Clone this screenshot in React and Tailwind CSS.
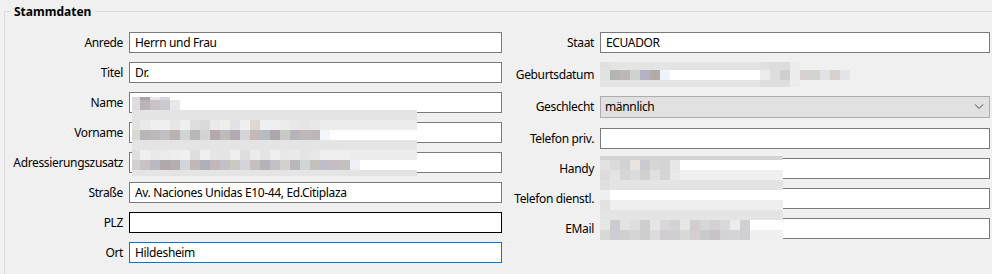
import React from 'react';

const font = { fontFamily: '"Noto Sans", "Liberation Sans", sans-serif', letterSpacing: '-0.35px' };

// pixelated blur boxes over the private data: [top, height, cells [x, w, color]]
function strip(x0, colors) {
  // first cell ends at the next multiple of ten, the rest are 10px wide
  const out = [];
  let x = x0;
  colors.forEach((c) => {
    const next = Math.floor(x / 10) * 10 + 10;
    out.push([x, next - x, c]);
    x = next;
  });
  return out;
}

const mosaics = [
  // Name / Vorname / Adressierungszusatz
  [97, 3, [[132, 8, '#dcd8dc'], [140, 10, '#aaa2a8'], [150, 10, '#e8e4e8'], [160, 10, '#d6d6de']]],
  [100, 10, strip(132, ['#e0dde0', '#bab4b8', '#c9c1c4', '#c9cbd0', '#e8e8ea'])],
  [110, 10, [[132, 285, '#e4e4e4']]],
  [120, 10, [...strip(132, ['#e4e2e0', '#e9e9e9', '#efefef', '#efefef', '#e6e6e6', '#efefef', '#dedede', '#dadada', '#eaeaea', '#eeeeec', '#e2e2e4', '#efefef', '#dcd8d6', '#eef0f2', '#efefef', '#ececea', '#e8e8e8', '#e6e6e6', '#e8e8e8']), [320, 97, '#ececec']]],
  [130, 10, [...strip(132, ['#d8d8d4', '#b8b6b8', '#bcbab8', '#c0bfc4', '#bab2b2', '#d0d2d6', '#b8b8b6', '#d4d2d4', '#b4aaae', '#bcbcb8', '#b2aab2', '#d4d4d8', '#c4b8b8', '#b8bcc0', '#ada6ac', '#c8c8c6', '#b4b4ba', '#c0b8b8', '#bcb6b8']), [320, 10, '#f0f6fa']]],
  [140, 10, [[132, 285, '#e4e4e4']]],
  [150, 10, [...strip(132, ['#dedede', '#efefef', '#e9e9e9', '#ebebeb', '#efecee', '#eef0f2', '#dedede', '#efefef', '#e6e6e6', '#e4e4e4', '#efefef', '#dedede', '#ebebeb', '#e4e4e4', '#efefef', '#e8e8e8', '#e9e9e9', '#e4e4e4', '#e8e8e8']), [320, 30, '#efefef'], [350, 67, '#ececec']]],
  [160, 10, [...strip(132, ['#d4d0d2', '#c8c4c4', '#bab8c0', '#b0a8aa', '#b4aeb0', '#d0d6d8', '#c0b8b8', '#b0b0b8', '#c0b8ba', '#c4c0c8', '#ccc8c4', '#d4d4da', '#c4c0c0', '#b4b4b8', '#c4c0c4', '#d4d0ce', '#b8b8bc', '#d0d4d4', '#c4c0bc', '#c0bcc8', '#c4bec4', '#c4c0c0']), [350, 10, '#eef0f4']]],
  [170, 6, [[132, 285, '#e4e4e4']]],
  // Geburtsdatum
  [62, 8, [[600, 10, '#e0e0e0'], [610, 150, '#e4e4e4'], [760, 10, '#e0e0e0'], [770, 20, '#dcdcdc'], [790, 10, '#ececec']]],
  [70, 10, [...strip(600, ['#e2e2e0', '#b4b6b2', '#bcb8b8', '#d0d2ce', '#b4b2c2', '#b0aca6', '#eef3fb']), [670, 90, '#ffffff'], ...strip(760, ['#ececec', '#dedede', '#d0cece', '#ececec', '#d6d2d0', '#d2d4d2', '#e2e2e4', '#d6d2d0', '#e4e4e6'])]],
  [80, 7, [[600, 160, '#e4e4e4'], [760, 30, '#dedede'], [790, 10, '#ececec']]],
  // Handy / Telefon dienstl. / EMail
  [156, 4, [[600, 183, '#d4d4d4']]],
  [160, 10, [...strip(600, ['#e2e2e2', '#dadadc', '#d2d2d2', '#e8e5e0', '#cacbd0', '#d6d6d6', '#d4d4d4', '#e6e6e8']), [680, 103, '#ffffff']]],
  [170, 10, [...strip(600, ['#dcdcdc', '#e4e4e6', '#d6d6d6', '#dcdcdc', '#d0d0d0', '#e0e0e0', '#d4d4d4', '#e8e8e8']), [680, 103, '#efefef']]],
  [180, 10, [[600, 10, '#e0e0e0'], [610, 173, '#e4e4e4']]],
  [190, 10, [[600, 10, '#efefef'], [610, 173, '#ffffff']]],
  [200, 10, [[600, 10, '#e2e2e2'], [610, 173, '#efefef']]],
  [210, 10, [[600, 183, '#e4e4e4']]],
  [220, 10, [...strip(600, ['#e6e6e4', '#cdcbcf', '#e2e2e2', '#dcdedf', '#cfcdcf', '#e6e6e6', '#dad8d6', '#d4d2d6', '#e6e6e4', '#d1cdd1', '#d4d6d8', '#d4d0d4', '#dad8da', '#ececec', '#d0d0d2']), [750, 33, '#ffffff']]],
  [230, 10, [...strip(600, ['#d8d8d6', '#cfcdd1', '#d0d0d0', '#d6d4d6', '#cecece', '#dcdcdc', '#d0ced2', '#d0ced2', '#d8d8d6', '#d4d0d2', '#c8cacc', '#c8c4c6', '#d4d2d4', '#d4d4d6', '#d0d0d2']), [750, 33, '#efefef']]],
];

function Mosaic() {
  return (
    <div className="pointer-events-none absolute inset-0">
      {mosaics.map(([top, h, cells], i) =>
        cells.map(([x, w, c], j) => (
          <div key={`${i}-${j}`} className="absolute" style={{ top, left: x, width: w, height: h, background: c }} />
        ))
      )}
    </div>
  );
}

function Field({ label, value, labelW, inputW, border = 'border-[#7a7a7a]', className = '' }) {
  return (
    <div className={`flex h-[21px] items-center gap-[6px] ${className}`}>
      <span className="shrink-0 text-right text-[12px] text-black" style={{ width: labelW }}>{label}</span>
      <div className={`flex h-[21px] items-center border bg-white pl-[5px] text-[12px] text-black ${border}`} style={{ width: inputW }}>
        {value}
      </div>
    </div>
  );
}

export default function App() {
  const L = { labelW: 118, inputW: 373 };
  const R = { labelW: 92, inputW: 390 };
  return (
    <div className="relative h-[274px] w-[992px] overflow-hidden bg-[#f0f0f0]" style={font}>
      <fieldset className="ml-[4px] mt-[4px] h-[300px] border-l border-t border-[#dcdcdc]">
        <legend className="ml-[6px] px-[3px] text-[12px] font-bold leading-[15px] tracking-normal text-black">Stammdaten</legend>
        <div className="flex pt-[13px]">
          <div className="flex flex-col gap-[9px]">
            <Field label="Anrede" value="Herrn und Frau" {...L} />
            <Field label="Titel" value="Dr." {...L} />
            <Field label="Name" value="" {...L} />
            <Field label="Vorname" value="" {...L} />
            <Field label="Adressierungszusatz" value="" {...L} />
            <Field label="Straße" value="Av. Naciones Unidas E10-44, Ed.Citiplaza" {...L} />
            <Field label="PLZ" value="" border="border-black" {...L} />
            <Field label="Ort" value="Hildesheim" border="border-[#0078d7]" {...L} />
          </div>
          <div className="flex flex-col">
            <Field label="Staat" value="ECUADOR" {...R} />
            <div className="mt-[11px] flex h-[21px] items-center gap-[6px]">
              <span className="w-[92px] text-right text-[12px] text-black">Geburtsdatum</span>
            </div>
            <div className="mt-[11px] flex h-[22px] items-center gap-[6px]">
              <span className="w-[92px] text-right text-[12px] text-black">Geschlecht</span>
              <div className="flex h-[22px] w-[390px] items-center justify-between border border-[#adadad] bg-[#e1e1e1] pl-[4px] pr-[5px] text-[12px] text-black">
                <span>männlich</span>
                <svg width="10" height="6" viewBox="0 0 10 6" fill="none" stroke="#444" strokeWidth="1">
                  <path d="M1 0.5 L5 4.5 L9 0.5" />
                </svg>
              </div>
            </div>
            <Field label="Telefon priv." value="" className="mt-[10px]" {...R} />
            <Field label="Handy" value="" className="mt-[9px]" {...R} />
            <Field label="Telefon dienstl." value="" className="mt-[9px]" {...R} />
            <Field label="EMail" value="" className="mt-[9px]" {...R} />
          </div>
        </div>
      </fieldset>
      <Mosaic />
    </div>
  );
}
